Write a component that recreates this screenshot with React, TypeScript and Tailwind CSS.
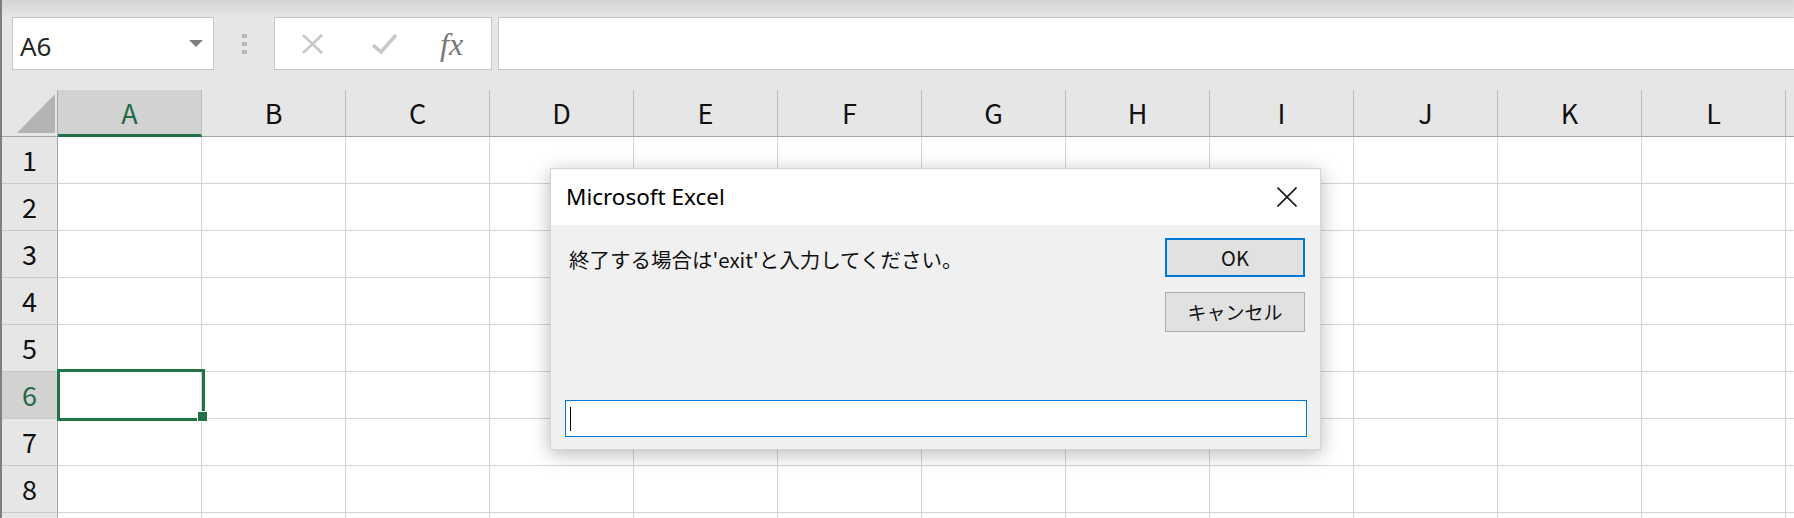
import React from 'react'

const cols = ['A', 'B', 'C', 'D', 'E', 'F', 'G', 'H', 'I', 'J', 'K', 'L', '']
const rows = [1, 2, 3, 4, 5, 6, 7, 8, 9]

function FormulaButtons() {
  return (
    <div className="flex w-[218px] shrink-0 items-center border border-[#c6c6c6] bg-white">
      <svg className="ml-[26px] h-[20px] w-[23px]" viewBox="0 0 23 20">
        <path d="M2 1 L21 19 M21 1 L2 19" stroke="#c8c8c8" strokeWidth="2.6" fill="none" />
      </svg>
      <svg className="ml-[47px] h-[22px] w-[27px]" viewBox="0 0 27 22">
        <path d="M2 12 L10 19 L25 2" stroke="#c8c8c8" strokeWidth="3.6" fill="none" />
      </svg>
      <span className="ml-[42px] font-['Liberation_Serif',serif] text-[32px] italic leading-none text-[#777777]">
        fx
      </span>
    </div>
  )
}

function Toolbar() {
  return (
    <div className="bg-[#e6e6e6]">
      <div className="h-[17px] bg-gradient-to-b from-[#d5d5d5] to-[#e6e6e6]" />
      <div className="flex h-[53px]">
        <div className="ml-[10px] flex w-[202px] shrink-0 items-center justify-between border border-[#c6c6c6] bg-white pl-[7px] pr-[10px] pt-[4px]">
          <span className="font-['Noto_Sans',sans-serif] text-[26px] leading-none text-[#262626]">A6</span>
          <svg className="mb-[4px] h-[7px] w-[14px]" viewBox="0 0 14 7">
            <path d="M0 0 H14 L7 7 Z" fill="#7f7f7f" />
          </svg>
        </div>
        <div className="flex w-[60px] shrink-0 flex-col items-center justify-center gap-[4px]">
          <span className="h-[4px] w-[5px] bg-[#b8b8b8]" />
          <span className="h-[4px] w-[5px] bg-[#b8b8b8]" />
          <span className="h-[4px] w-[5px] bg-[#b8b8b8]" />
        </div>
        <FormulaButtons />
        <div className="ml-[6px] flex-1 border border-r-0 border-[#c6c6c6] bg-white" />
      </div>
      <div className="h-[20px]" />
    </div>
  )
}

function HeaderRow() {
  return (
    <div className="flex h-[47px]">
      <div className="flex w-[56px] shrink-0 items-end justify-end border-r border-b border-r-[#a8a8a8] border-b-[#a5a5a5] pb-[3px] pr-[2px]">
        <svg className="h-[39px] w-[38px]" viewBox="0 0 38 39">
          <path d="M38 0 V39 H0 Z" fill="#b4b4b4" />
        </svg>
      </div>
      {cols.map((c, i) =>
        c === 'A' ? (
          <div
            key={i}
            className="flex h-[47px] w-[144px] shrink-0 items-center justify-center border-r border-b-[3px] border-r-[#bcbcbc] border-b-[#217346] bg-[#d2d2d2] pt-[2px] text-[27px] text-[#1e6b45]"
          >
            {c}
          </div>
        ) : (
          <div
            key={i}
            className="flex h-[47px] w-[144px] shrink-0 items-center justify-center border-r border-b border-r-[#bcbcbc] border-b-[#a5a5a5] text-[27px] text-[#111111]"
          >
            {c}
          </div>
        ),
      )}
    </div>
  )
}

function GridRow({ n }: { n: number }) {
  const selected = n === 6
  return (
    <div className="flex h-[47px]">
      <div
        className={`flex w-[56px] shrink-0 items-center justify-center border-r border-b border-r-[#a8a8a8] border-b-[#c9c9c9] text-[27px] ${
          selected ? 'bg-[#d2d2d2] text-[#1e6b45]' : 'bg-[#e6e6e6] text-[#111111]'
        }`}
      >
        {n < 9 ? n : ''}
      </div>
      {cols.map((c, i) => (
        <div key={i} className="h-[47px] w-[144px] shrink-0 border-r border-b border-[#d4d4d4] bg-white" />
      ))}
    </div>
  )
}

function InputDialog() {
  return (
    <div className="absolute left-[548px] top-[168px] flex h-[282px] w-[771px] flex-col border border-[#d4d4d4] bg-[#f0f0f0] shadow-[0_4px_18px_rgba(0,0,0,0.28)]">
      <div className="flex h-[56px] shrink-0 items-center justify-between bg-white pl-[15px] pr-[23px]">
        <span className="font-['Noto_Sans',sans-serif] text-[22.5px] text-black">Microsoft Excel</span>
        <svg className="h-[20px] w-[20px]" viewBox="0 0 20 20">
          <path d="M0.5 0.5 L19.5 19.5 M19.5 0.5 L0.5 19.5" stroke="#1a1a1a" strokeWidth="1.6" fill="none" />
        </svg>
      </div>
      <div className="flex flex-1 flex-col pl-[14px] pr-[13px] pt-[13px] pb-[12px]">
        <div className="flex justify-between">
          <p className="mt-[7px] pl-[4px] text-[20.5px] leading-[28px] text-[#111111]">
            終了する場合は'exit'と入力してください。
          </p>
          <div className="mr-[2px] flex flex-col gap-[15px]">
            <button className="h-[39px] w-[140px] border-2 border-[#0078d7] bg-[#e1e1e1] text-[20px] text-[#111111]">
              OK
            </button>
            <button className="h-[40px] w-[140px] border border-[#adadad] bg-[#e1e1e1] text-[19px] text-[#111111]">
              キャンセル
            </button>
          </div>
        </div>
        <div className="mt-auto flex h-[37px] items-center border border-[#0078d7] bg-white pl-[4px]">
          <span className="h-[24px] w-px bg-black" />
        </div>
      </div>
    </div>
  )
}

export default function App() {
  return (
    <div className="relative h-[518px] w-[1794px] overflow-hidden border-l-2 border-[#7f7f7f] bg-white font-['Noto_Sans_CJK_JP','Noto_Sans',sans-serif]">
      <Toolbar />
      <div className="bg-[#e6e6e6]">
        <HeaderRow />
        {rows.map((n) => (
          <GridRow key={n} n={n} />
        ))}
      </div>
      <div className="absolute left-[55px] top-[369px] h-[52px] w-[148px] border-[3px] border-[#217346]" />
      <div className="absolute left-[196px] top-[412px] h-[9px] w-[9px] bg-[#217346] ring-1 ring-white" />
      <InputDialog />
    </div>
  )
}
